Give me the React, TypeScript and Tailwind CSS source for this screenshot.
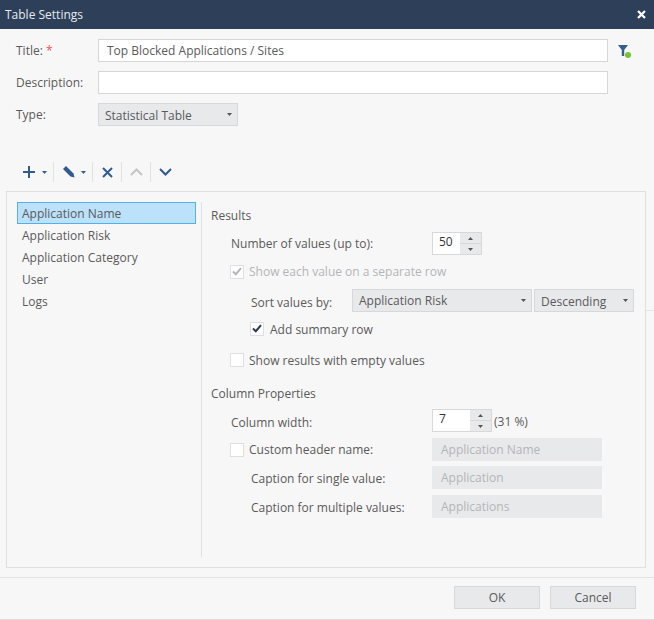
import React from "react";

const Caret = ({ up = false, className = "" }: { up?: boolean; className?: string }) => (
  <svg width="5" height="3" viewBox="0 0 5 3" className={className}>
    <path d={up ? "M0 3 L2.5 0 L5 3 Z" : "M0 0 L5 0 L2.5 3 Z"} fill="currentColor" />
  </svg>
);

const Check = ({ color }: { color: string }) => (
  <svg width="10" height="9" viewBox="0 0 10 9">
    <path d="M1 4.5 L3.8 7.2 L9 1.2" fill="none" stroke={color} strokeWidth="2" />
  </svg>
);

const Box = ({ checked, color = "#2b3a4e" }: { checked?: boolean; color?: string }) => (
  <span className="flex h-[14px] w-[14px] shrink-0 items-center justify-center border border-[#dddfe2] bg-white">
    {checked ? <Check color={color} /> : null}
  </span>
);

const Select = ({ label, className = "", textClass = "" }: { label: string; className?: string; textClass?: string }) => (
  <div className={`flex h-[23px] items-center justify-between border border-[#d6d8da] bg-[#e8e9eb] pl-[6px] pr-[5px] text-[#5a5a5a] ${className}`}>
    <span className={textClass}>{label}</span>
    <Caret className="text-[#555]" />
  </div>
);

const Spinner = ({ value, width }: { value: string; width: string }) => (
  <div className={`flex h-[23px] border border-[#d6d8da] bg-white ${width}`}>
    <span className="flex-1 pl-[6px] leading-[18px] text-[#333]">{value}</span>
    <div className="flex w-[21px] flex-col bg-[#e8e9eb] text-[#555]">
      <span className="flex flex-1 items-center justify-center border-b border-[#d6d8da]"><Caret up /></span>
      <span className="flex flex-1 items-center justify-center"><Caret /></span>
    </div>
  </div>
);

const Disabled = ({ label }: { label: string }) => (
  <div className="flex h-[23px] w-[170px] items-center bg-[#e8e9eb] pl-[9px] text-[#b4b5b7]">{label}</div>
);

const Sep = ({ className = "" }: { className?: string }) => <span className={`h-[20px] w-px bg-[#e0e1e3] ${className}`} />;

export default function App() {
  return (
    <div
      className="relative flex h-[620px] w-[654px] flex-col overflow-hidden border-b border-[#dcdddf] bg-[#f7f7f7] text-[12px] text-[#5a5a5a]"
      style={{ fontFamily: '"Open Sans", sans-serif' }}
    >
      <header className="flex h-[29px] shrink-0 items-center justify-between bg-[#2e4059] pl-[5px] pr-[8px] text-[#e6e9ee]">
        <span>Table Settings</span>
        <svg width="9" height="9" viewBox="0 0 9 9">
          <path d="M1 1 L8 8 M8 1 L1 8" stroke="#fff" strokeWidth="2.2" />
        </svg>
      </header>

      <div className="flex flex-col gap-[9px] pt-[10px] pl-[16px]">
        <div className="flex items-center">
          <label className="w-[82px]">Title: <span className="text-[#ef5350]">*</span></label>
          <div className="flex h-[23px] w-[510px] items-center border border-[#d6d6d6] bg-white pl-[8px]">Top Blocked Applications / Sites</div>
          <svg width="14" height="14" viewBox="0 0 14 14" className="ml-[10px] mt-[2px]">
            <path d="M0 0 H10 L6.2 5 V11 H3.8 V5 Z" fill="#33608f" />
            <circle cx="10" cy="10" r="3" fill="#7ac231" />
          </svg>
        </div>
        <div className="flex items-center">
          <label className="w-[82px]">Description:</label>
          <div className="h-[23px] w-[510px] border border-[#d6d6d6] bg-white" />
        </div>
        <div className="flex items-center">
          <label className="w-[82px]">Type:</label>
          <Select label="Statistical Table" className="w-[140px]" textClass="translate-y-[1px]" />
        </div>
      </div>

      <div className="mt-[36px] flex h-[20px] items-center pl-[23px] text-[#2f5b8f]">
        <svg width="12" height="12" viewBox="0 0 12 12"><path d="M6 0 V12 M0 6 H12" stroke="currentColor" strokeWidth="2" /></svg>
        <Caret className="ml-[7px]" />
        <Sep className="ml-[6px]" />
        <svg width="12" height="12" viewBox="0 0 12 12" className="ml-[9px]"><path d="M0 3 L3 0 L10.5 7.5 L11.5 11.5 L7.5 10.5 Z" fill="currentColor" /></svg>
        <Caret className="ml-[6px]" />
        <Sep className="ml-[6px]" />
        <svg width="11" height="11" viewBox="0 0 11 11" className="ml-[9px]"><path d="M1 1 L10 10 M10 1 L1 10" stroke="currentColor" strokeWidth="2" /></svg>
        <Sep className="ml-[8px]" />
        <svg width="13" height="8" viewBox="0 0 13 8" className="ml-[8px]"><path d="M1 7 L6.5 1.5 L12 7" fill="none" stroke="#c4c5c7" strokeWidth="2" /></svg>
        <Sep className="ml-[7px]" />
        <svg width="13" height="8" viewBox="0 0 13 8" className="ml-[8px]"><path d="M1 1 L6.5 6.5 L12 1" fill="none" stroke="currentColor" strokeWidth="2" /></svg>
      </div>

      <div className="ml-[6px] mt-[9px] flex h-[377px] w-[640px] border border-[#dfe0e2] pt-[10px]">
        <ul className="ml-[10px] w-[179px] shrink-0">
          <li className="flex h-[22px] items-center border border-[#52b0ee] bg-[#bbe1fb] pl-[4px] pt-[1px]">Application Name</li>
          {["Application Risk", "Application Category", "User", "Logs"].map((t) => (
            <li key={t} className="flex h-[22px] items-center pl-[5px] pt-[2px]">{t}</li>
          ))}
        </ul>
        <div className="ml-[5px] mb-[10px] flex-1 border-l border-[#dfe0e2] pl-[8px]">
          <div className="flex h-[26px] items-center pl-[1px] pt-[1px]">Results</div>
          <div className="mt-[4px] flex h-[23px] items-center pl-[21px]">
            <span className="w-[201px]">Number of values (up to):</span>
            <Spinner value="50" width="w-[50px]" />
          </div>
          <div className="mt-[5px] flex h-[23px] items-center gap-[5px] pl-[20px] text-[#b4b5b7]">
            <Box checked color="#b4b5b7" />
            <span>Show each value on a separate row</span>
          </div>
          <div className="mt-[6px] flex h-[23px] items-center pl-[41px]">
            <span className="w-[101px] translate-y-[2px]">Sort values by:</span>
            <Select label="Application Risk" className="w-[180px]" />
            <Select label="Descending" className="ml-[2px] w-[100px]" textClass="translate-y-[1px]" />
          </div>
          <div className="mt-[5px] flex h-[23px] items-center gap-[6px] pl-[40px]">
            <Box checked />
            <span className="translate-y-[1px]">Add summary row</span>
          </div>
          <div className="mt-[8px] flex h-[23px] items-center gap-[5px] pl-[20px]">
            <Box />
            <span className="translate-y-[1px]">Show results with empty values</span>
          </div>
          <div className="mt-[11px] flex h-[23px] items-center pl-[1px]">Column Properties</div>
          <div className="mt-[4px] flex h-[23px] items-center pl-[21px]">
            <span className="w-[201px] translate-y-[2px]">Column width:</span>
            <Spinner value="7" width="w-[60px]" />
            <span className="ml-[2px] translate-y-[1px]">(31 %)</span>
          </div>
          <div className="mt-[6px] flex h-[23px] items-center pl-[20px]">
            <Box />
            <span className="ml-[5px] w-[183px]">Custom header name:</span>
            <Disabled label="Application Name" />
          </div>
          <div className="mt-[5px] flex h-[23px] items-center pl-[41px]">
            <span className="w-[181px] translate-y-[1px]">Caption for single value:</span>
            <Disabled label="Application" />
          </div>
          <div className="mt-[6px] flex h-[23px] items-center pl-[41px]">
            <span className="w-[181px] translate-y-[1px]">Caption for multiple values:</span>
            <Disabled label="Applications" />
          </div>
        </div>
      </div>

      <footer className="mt-[9px] flex flex-1 items-start justify-end gap-[10px] border-t border-[#e2e3e5] pt-[8px] pr-[18px]">
        <button className="h-[23px] w-[86px] border border-[#d6d8da] bg-[#e8e9eb]">OK</button>
        <button className="h-[23px] w-[86px] border border-[#d6d8da] bg-[#e8e9eb]">Cancel</button>
      </footer>
      <span className="absolute right-0 top-[310px] h-px w-[8px] bg-[#e6e6e0]" />
    </div>
  );
}
